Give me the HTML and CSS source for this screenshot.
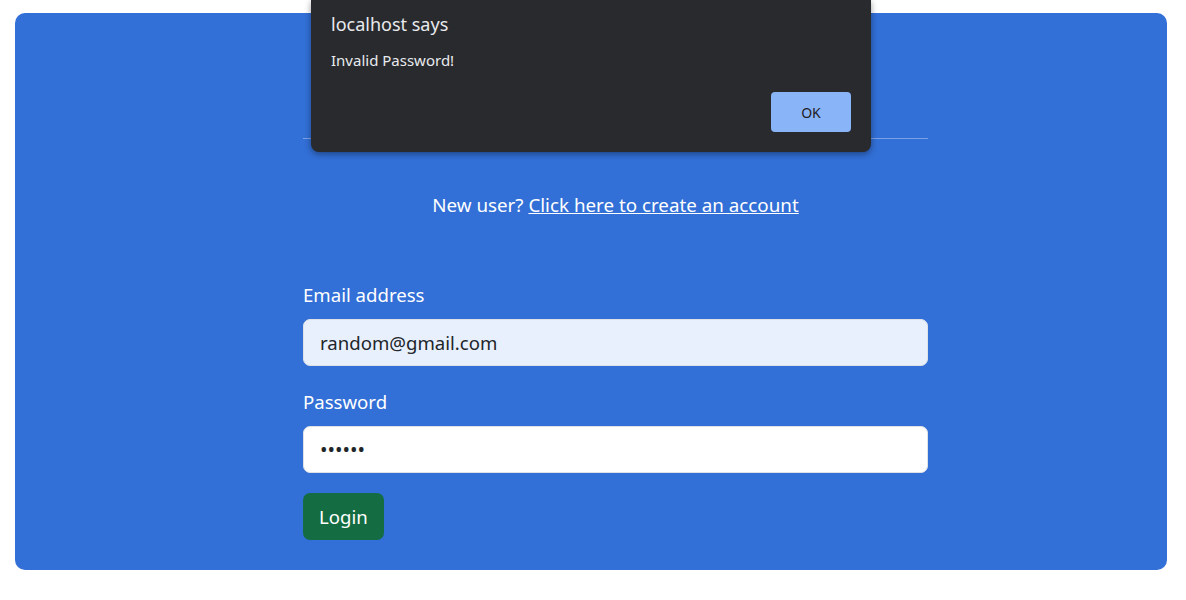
FILE: index.html
```html
<!DOCTYPE html>
<html lang="en">
<head>
<meta charset="utf-8">
<title>Login</title>
<link rel="stylesheet" href="styles.css">
</head>
<body>
  <main class="card">
    <div class="inner">
      <div class="head"></div>
      <hr class="rule">
      <p class="signup">New user? <a href="#" class="signup-link">Click here to create an account</a></p>
      <form class="form">
        <label class="label" for="email">Email address</label>
        <input class="control autofill" id="email" type="email" value="random@gmail.com">
        <label class="label label-second" for="pw">Password</label>
        <input class="control pw" id="pw" type="password" value="random">
        <button class="btn" type="button">Login</button>
      </form>
    </div>
  </main>
  <div class="dialog">
    <div class="dialog-title">localhost says</div>
    <div class="dialog-msg">Invalid Password!</div>
    <div class="dialog-actions"><button class="ok" type="button">OK</button></div>
  </div>
</body>
</html>
```
FILE: styles.css
```css
html, body {
  margin: 0;
  padding: 0;
  background: #ffffff;
  font-family: "Segoe UI", "Noto Sans", "Open Sans", sans-serif;
}
body {
  padding: 13px 0 0 15px;
}
.card {
  width: 1152px;
  box-sizing: border-box;
  background: #326fd6;
  border-radius: 10px;
  padding: 0 0 30px 288px;
}
.inner {
  width: 625px;
  display: flex;
  flex-direction: column;
}
.head {
  height: 125px;
}
.rule {
  margin: 0;
  border: 0;
  border-top: 1px solid rgba(255, 255, 255, 0.35);
  height: 0;
}
.signup {
  margin: 51px 0 0;
  text-align: center;
  color: #ffffff;
  font-size: 18.8px;
  line-height: 30px;
}
.signup-link {
  color: #ffffff;
  text-decoration: underline;
}
.form {
  display: flex;
  flex-direction: column;
  align-items: flex-start;
  margin-top: 60px;
}
.label {
  color: #ffffff;
  font-size: 18.6px;
  line-height: 30px;
  margin-bottom: 9px;
}
.label-second {
  margin-top: 21px;
}
.control {
  width: 625px;
  height: 47px;
  box-sizing: border-box;
  border: 1px solid #dee2e6;
  border-radius: 7px;
  padding: 0 16px;
  font-family: inherit;
  font-size: 18.6px;
  color: #212529;
  background: #ffffff;
  outline: none;
}
.pw {
  font-size: 20px;
}
.autofill {
  background: #e8f0fe;
}
.btn {
  margin-top: 20px;
  height: 47px;
  padding: 0 16px;
  border: 0;
  border-radius: 7px;
  background: #146c43;
  color: #ffffff;
  font-family: inherit;
  font-size: 18.6px;
}
.dialog {
  position: absolute;
  left: 311px;
  top: 0;
  width: 560px;
  height: 152px;
  box-sizing: border-box;
  background: #292a2d;
  border-radius: 0 0 8px 8px;
  box-shadow: 0 2px 6px rgba(0, 0, 0, 0.4);
  padding: 12px 20px 0 20px;
  color: #e8eaed;
  display: flex;
  flex-direction: column;
}
.dialog-title {
  font-size: 18px;
  line-height: 24px;
}
.dialog-msg {
  margin-top: 14px;
  font-size: 15px;
  line-height: 20px;
}
.dialog-actions {
  display: flex;
  justify-content: flex-end;
  margin-top: 22px;
}
.ok {
  width: 80px;
  height: 40px;
  border: 0;
  border-radius: 4px;
  background: #8ab4f8;
  color: #202124;
  font-family: inherit;
  font-size: 14px;
}
```
